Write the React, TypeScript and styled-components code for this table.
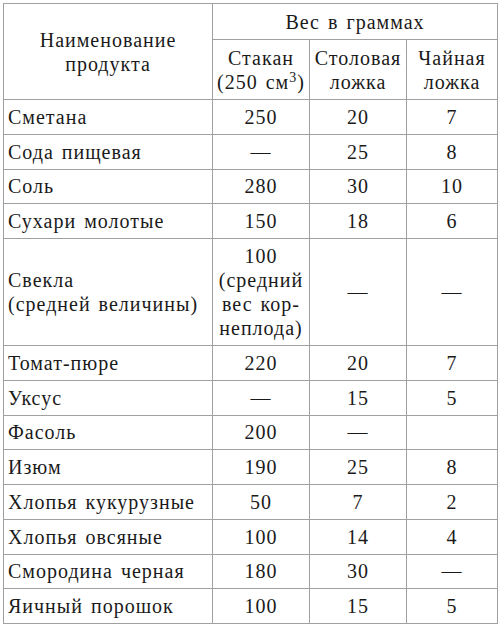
import styled, { createGlobalStyle } from "styled-components";

const GlobalStyle = createGlobalStyle`
  html, body {
    margin: 0;
    padding: 0;
    background: #ffffff;
  }
  body {
    padding: 3px;
    font-family: "Liberation Serif", "Times New Roman", serif;
    color: #1a1a1a;
  }
`;

type Row = {
  name: string[];
  glass: string[];
  table: string;
  tea: string;
  tall?: boolean;
};

const ROWS: Row[] = [
  { name: ["Сметана"], glass: ["250"], table: "20", tea: "7" },
  { name: ["Сода пищевая"], glass: ["—"], table: "25", tea: "8" },
  { name: ["Соль"], glass: ["280"], table: "30", tea: "10" },
  { name: ["Сухари молотые"], glass: ["150"], table: "18", tea: "6" },
  {
    name: ["Свекла", "(средней величины)"],
    glass: ["100", "(средний", "вес кор-", "неплода)"],
    table: "—",
    tea: "—",
    tall: true,
  },
  { name: ["Томат-пюре"], glass: ["220"], table: "20", tea: "7" },
  { name: ["Уксус"], glass: ["—"], table: "15", tea: "5" },
  { name: ["Фасоль"], glass: ["200"], table: "—", tea: "" },
  { name: ["Изюм"], glass: ["190"], table: "25", tea: "8" },
  { name: ["Хлопья кукурузные"], glass: ["50"], table: "7", tea: "2" },
  { name: ["Хлопья овсяные"], glass: ["100"], table: "14", tea: "4" },
  { name: ["Смородина черная"], glass: ["180"], table: "30", tea: "—" },
  { name: ["Яичный порошок"], glass: ["100"], table: "15", tea: "5" },
];

const Table = styled.table`
  width: 494px;
  border-collapse: collapse;
  table-layout: fixed;
  font-size: 20px;
  line-height: 24px;
  letter-spacing: 1px;
  word-spacing: 2px;
`;

const HeadRow = styled.tr<{ $h: number }>`
  height: ${(p) => p.$h}px;
`;

const BodyRow = styled.tr<{ $tall?: boolean }>`
  height: ${(p) => (p.$tall ? 107 : 34.75)}px;
`;

const Cell = styled.td<{ $left?: boolean }>`
  border: 1px solid #a0a0a0;
  padding: 0 4px;
  text-align: ${(p) => (p.$left ? "left" : "center")};
  vertical-align: middle;
  white-space: nowrap;
`;

const HeadCell = styled(Cell).attrs({ as: "th" })`
  font-weight: normal;
`;

const Line = styled.div`
  display: block;
`;

const Sup = styled.sup`
  font-size: 14px;
  line-height: 0;
  vertical-align: 7px;
`;

const lines = (items: string[]) =>
  items.map((t, i) => <Line key={i}>{t}</Line>);

export default function App() {
  return (
    <>
      <GlobalStyle />
      <Table>
        <colgroup>
          <col style={{ width: 209 }} />
          <col style={{ width: 97 }} />
          <col style={{ width: 97 }} />
          <col style={{ width: 91 }} />
        </colgroup>
        <thead>
          <HeadRow $h={36}>
            <HeadCell rowSpan={2}>
              <Line>Наименование</Line>
              <Line>продукта</Line>
            </HeadCell>
            <HeadCell colSpan={3}>Вес в граммах</HeadCell>
          </HeadRow>
          <HeadRow $h={60}>
            <HeadCell>
              <Line>Стакан</Line>
              <Line>
                (250 см<Sup>3</Sup>)
              </Line>
            </HeadCell>
            <HeadCell>
              <Line>Столовая</Line>
              <Line>ложка</Line>
            </HeadCell>
            <HeadCell>
              <Line>Чайная</Line>
              <Line>ложка</Line>
            </HeadCell>
          </HeadRow>
        </thead>
        <tbody>
          {ROWS.map((r) => (
            <BodyRow key={r.name.join(" ")} $tall={r.tall}>
              <Cell $left>{lines(r.name)}</Cell>
              <Cell>{lines(r.glass)}</Cell>
              <Cell>{r.table}</Cell>
              <Cell>{r.tea}</Cell>
            </BodyRow>
          ))}
        </tbody>
      </Table>
    </>
  );
}
